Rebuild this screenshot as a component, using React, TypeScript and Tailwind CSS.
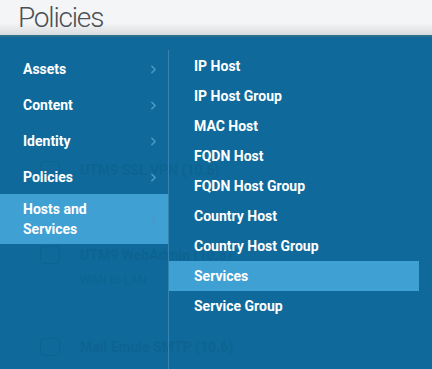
import { ChevronRight } from "lucide-react";

const LEFT = [
  { label: "Assets" },
  { label: "Content" },
  { label: "Identity" },
  { label: "Policies" },
  { label: "Hosts and Services", active: true },
];

const RIGHT = [
  "IP Host",
  "IP Host Group",
  "MAC Host",
  "FQDN Host",
  "FQDN Host Group",
  "Country Host",
  "Country Host Group",
  "Services",
  "Service Group",
];

const BG_ROWS = [
  { title: "UTM9 SSL VPN (10.6)", sub: "", top: "mt-[126px]" },
  { title: "UTM9 WebAdmin (10.6)", sub: "WAN to LAN", top: "mt-[67px]" },
  { title: "Mail Emule SMTP (10.6)", sub: "", top: "mt-[48px]" },
];

export default function App() {
  return (
    <div className="w-[432px] h-[369px] relative overflow-hidden bg-[#0f6a9b] font-['Roboto',sans-serif]">
      {/* page header */}
      <div className="h-[35px] bg-gradient-to-b from-[#f4f5f6] from-65% to-[#d9dcde] pl-[18px] pt-[1px]">
        <h1 className="text-[28px] font-light leading-[34px] tracking-[-1.2px] text-[#4a5057]">
          Policies
        </h1>
      </div>

      {/* faint page content under the menu */}
      <div className="pl-[40px] flex flex-col">
        {BG_ROWS.map((r) => (
          <div key={r.title} className={`${r.top} flex items-start gap-[20px]`}>
            <div className="w-[20px] h-[18px] rounded-sm border border-[#0d6392]" />
            <div className="flex flex-col">
              <span className="text-[14px] font-bold text-[#0d6392] leading-[18px]">{r.title}</span>
              {r.sub && <span className="text-[12px] text-[#0d6392] leading-[20px] mt-[6px]">{r.sub}</span>}
            </div>
          </div>
        ))}
      </div>

      {/* flyout menu */}
      <div className="absolute left-0 right-0 top-[35px] bottom-0 border-t-2 border-[#2b6f88] flex">
        <div className="w-[168px] pt-[14px] flex flex-col">
          {LEFT.map((item) => (
            <div
              key={item.label}
              className={`flex items-center justify-between pl-[23px] pr-[8px] text-[14px] font-bold text-white leading-[20px] ${
                item.active ? "bg-[#3fa0d3] py-[5px] mt-[-1px]" : "h-[36px]"
              }`}
            >
              <span className={item.active ? "w-[80px]" : ""}>{item.label}</span>
              <ChevronRight className="w-[13px] h-[13px] text-[#4b98c6]" strokeWidth={3} />
            </div>
          ))}
        </div>
        <div className="w-px bg-[#3584b2] mt-[13px]" />
        <div className="w-[250px] pt-[14px] flex flex-col">
          {RIGHT.map((label) => (
            <div
              key={label}
              className={`h-[30px] flex items-center pl-[25px] text-[14px] font-bold text-white ${
                label === "Services" ? "bg-[#3fa0d3]" : ""
              }`}
            >
              {label}
            </div>
          ))}
        </div>
      </div>
    </div>
  );
}
